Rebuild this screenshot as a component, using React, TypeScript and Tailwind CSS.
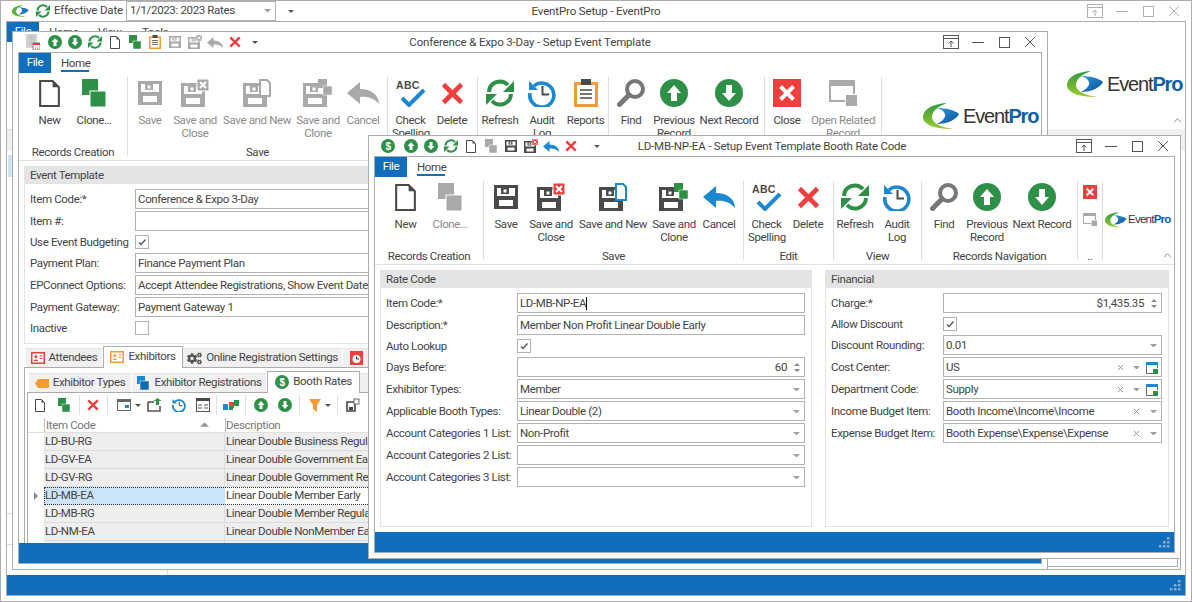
import React from "react";
import { FaCogs } from "react-icons/fa";

const GREEN = "#2e8f47";
const BLUE = "#1c88cf";
const RED = "#ef3e3e";
const DARK = "#4a4a4a";
const GRAY = "#a9a9a9";

type IP = { className?: string };
type CP = IP & { c?: string };

function Floppy({ x = 0, y = 0, c = DARK }: { x?: number; y?: number; c?: string }) {
  return (
    <g transform={`translate(${x} ${y})`}>
      <rect width="24" height="24" fill={c} />
      <rect x="3" y="3" width="18" height="8" fill="#fff" />
      <rect x="7" y="3" width="8" height="6" fill={c} />
      <rect x="9.5" y="4.5" width="3" height="3" fill="#fff" />
      <rect x="5" y="15" width="14" height="6" fill="#fff" />
    </g>
  );
}
const Page = ({ className, c = DARK }: CP) => (
  <svg viewBox="0 0 20 26" className={className}>
    <path d="M1 1H13L19 7V25H1Z" fill="#fff" stroke={c} strokeWidth="2" />
    <path d="M13 1L19 7H13Z" fill={c} />
  </svg>
);
const Clone = ({ className, c = GREEN }: CP) => (
  <svg viewBox="0 0 24 28" className={className}>
    <rect width="16" height="16" fill={c} />
    <rect x="8" y="12" width="16" height="16" fill={c} stroke="#fff" strokeWidth="1" />
  </svg>
);
const Save = ({ className, c = DARK }: CP) => (
  <svg viewBox="0 0 24 24" className={className}><Floppy c={c} /></svg>
);
const SaveClose = ({ className, c = DARK, r = RED }: CP & { r?: string }) => (
  <svg viewBox="0 0 28 28" className={className}>
    <Floppy y={4} c={c} />
    <rect x="16" width="12" height="12" fill={r} stroke="#fff" strokeWidth="1" />
    <path d="M19 3L25 9M25 3L19 9" stroke="#fff" strokeWidth="2" />
  </svg>
);
const SaveNew = ({ className, c = DARK, b = BLUE }: CP & { b?: string }) => (
  <svg viewBox="0 0 28 28" className={className}>
    <Floppy y={4} c={c} />
    <path d="M17 1H24L27 4V17H17Z" fill="#fff" stroke={b} strokeWidth="2" />
  </svg>
);
const SaveClone = ({ className, c = DARK, g = GREEN }: CP & { g?: string }) => (
  <svg viewBox="0 0 30 28" className={className}>
    <Floppy y={4} c={c} />
    <rect x="15" width="9" height="9" fill={g} />
    <rect x="20" y="7" width="9" height="9" fill={g} stroke="#fff" strokeWidth=".5" />
  </svg>
);
const Cancel = ({ className, c = BLUE }: CP) => (
  <svg viewBox="0 0 32 22" className={className}>
    <path d="M0 11L13 0V7C24 7 32 13 32 22C27 16 20 14 13 15V22Z" fill={c} />
  </svg>
);
const XMark = ({ className, c = RED }: CP) => (
  <svg viewBox="0 0 23 23" className={className}>
    <path d="M2.5 2.5L20.5 20.5M20.5 2.5L2.5 20.5" stroke={c} strokeWidth="4.6" />
  </svg>
);
const Check = ({ className }: IP) => (
  <svg viewBox="0 0 30 27" className={className}>
    <text x="0" y="9" fontSize="10.5" fontWeight="700" fill={DARK} fontFamily="Liberation Sans, sans-serif" letterSpacing=".3">ABC</text>
    <path d="M6 18L13 25L28 10" fill="none" stroke={BLUE} strokeWidth="4" />
  </svg>
);
const Refresh = ({ className, c = GREEN }: CP) => (
  <svg viewBox="0 0 28 28" className={className}>
    <g>
      <path d="M3 13A11 11 0 0 1 22 6" fill="none" stroke={c} strokeWidth="4" />
      <path d="M28 2V13H17Z" fill={c} />
    </g>
    <g transform="rotate(180 14 14)">
      <path d="M3 13A11 11 0 0 1 22 6" fill="none" stroke={c} strokeWidth="4" />
      <path d="M28 2V13H17Z" fill={c} />
    </g>
  </svg>
);
const Audit = ({ className, c = BLUE }: CP) => (
  <svg viewBox="0 0 28 28" className={className}>
    <path d="M6 7A12 12 0 1 1 2 14" fill="none" stroke={c} strokeWidth="3.6" />
    <path d="M1 2V11H10Z" fill={c} />
    <path d="M14.5 7V15.5H21" fill="none" stroke={DARK} strokeWidth="2" />
  </svg>
);
const Reports = ({ className }: IP) => (
  <svg viewBox="0 0 24 28" className={className}>
    <rect y="3" width="24" height="25" fill="#f79a33" />
    <rect x="3" y="6" width="18" height="19" fill="#fff" />
    <rect x="7" y="0" width="10" height="6" fill={DARK} />
    <path d="M6 11H18M6 15H18M6 19H18" stroke={DARK} strokeWidth="1.6" />
  </svg>
);
const Find = ({ className }: IP) => (
  <svg viewBox="0 0 28 28" className={className}>
    <circle cx="18" cy="10" r="8" fill="none" stroke="#777" strokeWidth="4" />
    <path d="M12 16L2.5 25.5" stroke="#777" strokeWidth="5" strokeLinecap="round" />
  </svg>
);
const Up = ({ className }: IP) => (
  <svg viewBox="0 0 28 28" className={className}>
    <circle cx="14" cy="14" r="14" fill={GREEN} />
    <path d="M14 6L21 14H17V22H11V14H7Z" fill="#fff" />
  </svg>
);
const Down = ({ className }: IP) => (
  <svg viewBox="0 0 28 28" className={className}>
    <circle cx="14" cy="14" r="14" fill={GREEN} />
    <path d="M14 22L21 14H17V6H11V14H7Z" fill="#fff" />
  </svg>
);
const CloseBox = ({ className }: IP) => (
  <svg viewBox="0 0 28 28" className={className}>
    <rect width="28" height="28" fill={RED} />
    <path d="M7.5 7.5L20.5 20.5M20.5 7.5L7.5 20.5" stroke="#fff" strokeWidth="4" />
  </svg>
);
const OpenRelated = ({ className, c = GRAY }: CP) => (
  <svg viewBox="0 0 28 26" className={className}>
    <path d="M1 5V21H16" fill="none" stroke={c} strokeWidth="2" />
    <rect width="26" height="6" fill={c} />
    <path d="M25 6V14" stroke={c} strokeWidth="2" />
    <rect x="17" y="15" width="11" height="11" fill={c} />
  </svg>
);
const Dollar = ({ className }: IP) => (
  <svg viewBox="0 0 14 14" className={className}>
    <circle cx="7" cy="7" r="7" fill={GREEN} />
    <text x="7" y="10.6" textAnchor="middle" fontSize="10" fontWeight="700" fill="#fff" fontFamily="Liberation Sans, sans-serif">$</text>
  </svg>
);
const GridDoc = ({ className }: IP) => (
  <svg viewBox="0 0 14 16" className={className}>
    <rect width="11" height="14" fill="#d2d2d2" />
    <path d="M2 3H9M2 6H9M2 9H9M5 1V12" stroke="#bcbcbc" strokeWidth="1" />
    <rect x="7" y="9" width="7" height="7" fill="#fff" stroke="#555" strokeWidth=".7" />
    <rect x="7" y="9" width="7" height="2" fill="#e33" />
    <path d="M9 13H9.8M11 13H11.8M9 14.6H9.8M11 14.6H11.8" stroke="#555" strokeWidth=".8" />
  </svg>
);
const Caret = ({ className, c = "#555" }: CP) => (
  <svg viewBox="0 0 8 4" className={className}><path d="M0 0H8L4 4Z" fill={c} /></svg>
);
const PinBtn = ({ c }: { c: string }) => (
  <svg viewBox="0 0 16 14" className="w-[16px] h-[14px]">
    <rect x=".5" y=".5" width="15" height="13" fill="none" stroke={c} />
    <path d="M1 3.5H15" stroke={c} />
    <path d="M8 12V6M5.5 8.5L8 6L10.5 8.5" fill="none" stroke={c} />
  </svg>
);
function WinButtons({ c, className }: { c: string; className: string }) {
  return (
    <div className={`flex items-center ${className}`}>
      <PinBtn c={c} />
      <svg viewBox="0 0 14 14" className="w-[14px] h-[14px] ml-[12px]"><path d="M1 7.5H13" stroke={c} /></svg>
      <svg viewBox="0 0 14 14" className="w-[14px] h-[14px] ml-[12px]"><rect x="2.5" y="2.5" width="10" height="10" fill="none" stroke={c} /></svg>
      <svg viewBox="0 0 14 14" className="w-[14px] h-[14px] ml-[12px]"><path d="M2 2L12 12M12 2L2 12" stroke={c} /></svg>
    </div>
  );
}

function Logo({ big }: { big?: boolean }) {
  return (
    <div className={big ? "flex items-center w-[116px] h-[26px]" : "flex items-center w-[68px] h-[16px]"}>
      <svg viewBox="0 0 37 26" className={big ? "w-[37px] h-[26px] shrink-0" : "w-[22px] h-[16px] shrink-0"}>
        <defs>
          <linearGradient id="lgG" x1="0" y1="0" x2="0" y2="1">
            <stop offset="0" stopColor="#2f9a3f" />
            <stop offset="1" stopColor="#9ccb2c" />
          </linearGradient>
          <linearGradient id="lgB" x1="0" y1="0" x2="1" y2="1">
            <stop offset="0" stopColor="#2a9ad8" />
            <stop offset="1" stopColor="#0c4f9c" />
          </linearGradient>
        </defs>
        <path d="M24 0C8 1 0 7 0 14C0 21 10 26 30 26C14 24 8 18 9 13C10 7 16 3 24 0Z" fill="url(#lgG)" />
        <path d="M14 5C22 5 32 7 36 11C33 17 24 21 14 21C20 18 23 14 22 11C21 8 18 6 14 5Z" fill="url(#lgB)" />
      </svg>
      <span className={big
        ? "ml-[3px] text-[20px] leading-none tracking-[-1.15px] [font-family:'Liberation_Sans',sans-serif] text-[#333]"
        : "ml-[1px] text-[11.5px] leading-none tracking-[-0.75px] [font-family:'Liberation_Sans',sans-serif] text-[#333]"}>
        Event<span className="font-bold text-[#0f5fa8]">Pro</span>
      </span>
    </div>
  );
}

type Btn = { w: string; icon: React.ReactNode; label: string; off?: boolean };
type Grp = { w: string; pl: string; label: string; btns: Btn[] };

function Ribbon({ groups, fill, home }: { groups: Grp[]; fill: React.ReactNode; home: string }) {
  return (
    <div className="shrink-0">
      <div className="flex h-[20px]">
        <div className="w-[32px] bg-[#106ebe] text-white flex items-center justify-center">File</div>
        <div className="ml-[10px] w-[28px] text-center text-[#444] border-b-[2px] border-[#106ebe] h-[19px] pt-[3px] leading-[14px]">{home}</div>
      </div>
      <div className="relative flex h-[88px] border-b border-[#e2e2e2]">
        {groups.map((g) => (
          <div key={g.label + g.w} className={`${g.w} shrink-0 mt-[4px] h-[79px] border-r border-[#dedede] flex flex-col`}>
            <div className={`flex h-[65px] shrink-0 pt-[2px] ${g.pl}`}>
              {g.btns.map((b) => (
                <div key={b.label} className={`${b.w} shrink-0 flex flex-col items-center`}>
                  <div className="h-[28px] flex items-center justify-center">{b.icon}</div>
                  <div className={`mt-[7px] w-full text-center leading-[13px] whitespace-pre ${b.off ? "text-[#8a8a8a]" : "text-[#444]"}`}>{b.label}</div>
                </div>
              ))}
            </div>
            <div className="h-[14px] shrink-0 mt-[3px] leading-[14px] text-center text-[#444]">{g.label}</div>
          </div>
        ))}
        {fill}
      </div>
    </div>
  );
}

const ico = "w-[28px] h-[28px]";
const G1 = (off: boolean): Grp => ({
  w: "w-[109px]", pl: "pl-[10px]", label: "Records Creation",
  btns: [
    { w: "w-[41px]", label: "New", icon: <Page className="w-[21px] h-[27px]" /> },
    { w: "w-[48px]", label: "Clone…", off, icon: <Clone className="w-[24px] h-[28px]" c={off ? GRAY : GREEN} /> },
  ],
});
const G2 = (off: boolean): Grp => {
  const c = off ? GRAY : DARK;
  return {
    w: "w-[260px]", pl: "pl-[5px]", label: "Save",
    btns: [
      { w: "w-[34px]", label: "Save", off, icon: <Save className="w-[24px] h-[24px]" c={c} /> },
      { w: "w-[56px]", label: "Save and\nClose", off, icon: <SaveClose className={ico} c={c} r={off ? GRAY : RED} /> },
      { w: "w-[68px]", label: "Save and New", off, icon: <SaveNew className={ico} c={c} b={off ? GRAY : BLUE} /> },
      { w: "w-[54px]", label: "Save and\nClone", off, icon: <SaveClone className="w-[30px] h-[28px]" c={c} g={off ? GRAY : GREEN} /> },
      { w: "w-[36px]", label: "Cancel", off, icon: <Cancel className="w-[32px] h-[22px]" c={off ? GRAY : BLUE} /> },
    ],
  };
};
const G3: Grp = {
  w: "w-[90px]", pl: "pl-[4px]", label: "Edit",
  btns: [
    { w: "w-[37px]", label: "Check\nSpelling", icon: <Check className="w-[30px] h-[27px]" /> },
    { w: "w-[46px]", label: "Delete", icon: <XMark className="w-[23px] h-[23px]" /> },
  ],
};
const Refr: Btn = { w: "w-[42px]", label: "Refresh", icon: <Refresh className={ico} /> };
const Aud: Btn = { w: "w-[42px]", label: "Audit\nLog", icon: <Audit className={ico} /> };
const Nav: Grp = {
  w: "w-[156px]", pl: "", label: "Records Navigation",
  btns: [
    { w: "w-[44px]", label: "Find", icon: <Find className={ico} /> },
    { w: "w-[42px]", label: "Previous\nRecord", icon: <Up className={ico} /> },
    { w: "w-[68px]", label: "Next Record", icon: <Down className={ico} /> },
  ],
};

const Grip = () => (
  <svg viewBox="0 0 11 11" className="w-[11px] h-[11px]">
    <g fill="#8fa8c4">
      <rect x="8" y="0" width="2.5" height="2.5" />
      <rect x="4" y="4" width="2.5" height="2.5" />
      <rect x="8" y="4" width="2.5" height="2.5" />
      <rect x="0" y="8" width="2.5" height="2.5" />
      <rect x="4" y="8" width="2.5" height="2.5" />
      <rect x="8" y="8" width="2.5" height="2.5" />
    </g>
  </svg>
);
const StatusBar = () => (
  <div className="shrink-0 h-[20px] bg-[#106ebe] flex justify-end items-end pr-[4px] pb-[4px]">
    <Grip />
  </div>
);

const inputCls = "h-[20px] flex-1 min-w-0 border border-[#b2b2b2] bg-white flex items-center pl-[2px] pr-[3px] pt-[1px] text-[#444] overflow-hidden whitespace-nowrap";

function Row({ label, lw, children }: { label: string; lw: string; children: React.ReactNode }) {
  return (
    <div className="flex items-center">
      <div className={`${lw} shrink-0 pt-[2px] text-[#444] whitespace-nowrap`}>{label}</div>
      {children}
    </div>
  );
}
const Drop = () => <Caret className="w-[7px] h-[3.5px] ml-auto shrink-0 mr-[1px]" c="#a0a0a0" />;
const Spin = () => (
  <span className="flex flex-col gap-[3px] ml-[7px] shrink-0 mr-[1px]">
    <Caret className="w-[6px] h-[3px] rotate-180" c="#888" />
    <Caret className="w-[6px] h-[3px]" c="#888" />
  </span>
);
const Clear = () => (
  <svg viewBox="0 0 8 8" className="w-[7px] h-[7px] ml-auto shrink-0"><path d="M1 1L7 7M7 1L1 7" stroke="#8a8a8a" /></svg>
);
const MiniWin = () => (
  <svg viewBox="0 0 12 12" className="w-[12px] h-[12px] ml-[6px] shrink-0">
    <path d="M.5 2V11.5H8" fill="none" stroke="#666" />
    <rect width="12" height="3" fill={BLUE} />
    <path d="M11.5 3V6" stroke="#666" />
    <rect x="7" y="7" width="5" height="5" fill={GREEN} />
  </svg>
);
const Box = ({ checked }: { checked?: boolean }) => (
  <div className="w-[14px] h-[14px] border border-[#b2b2b2] flex items-center justify-center">
    {checked && (
      <svg viewBox="0 0 10 10" className="w-[10px] h-[10px]"><path d="M2 5.5L4 7.5L8.5 2.5" fill="none" stroke="#555" strokeWidth="1.3" /></svg>
    )}
  </div>
);
const ChkRow = ({ label, lw, checked }: { label: string; lw: string; checked?: boolean }) => (
  <div className="flex items-center h-[18px]">
    <div className={`${lw} shrink-0 pt-[2px] text-[#444] whitespace-nowrap`}>{label}</div>
    <Box checked={checked} />
  </div>
);

const Panel = ({ title, className, children }: { title: string; className: string; children: React.ReactNode }) => (
  <div className={`border border-[#e4e4e4] flex flex-col ${className}`}>
    <div className="h-[18px] bg-[#e4e4e4] leading-[18px] text-[#444] -mx-[1px] -mt-[1px] px-[6px]">{title}</div>
    <div className="flex flex-col gap-[2px] pl-[5px] pr-[6px] pt-[5px]">{children}</div>
  </div>
);

const Cell = ({ children, w = "w-[20px]" }: { children?: React.ReactNode; w?: string }) => (
  <div className={`${w} h-[20px] flex items-center justify-center shrink-0`}>{children}</div>
);

const IdCard = ({ c }: { c: string }) => (
  <svg viewBox="0 0 14 12" className="w-[14px] h-[12px] shrink-0">
    <rect x=".75" y=".75" width="12.5" height="10.5" fill="#fff" stroke={c} strokeWidth="1.5" />
    <circle cx="4.8" cy="4.6" r="1.5" fill={c} />
    <path d="M2.5 9C2.5 7 7 7 7 9Z" fill={c} />
    <path d="M8.5 4H11.5M8.5 6.5H11.5" stroke={c} />
  </svg>
);

const Tab = ({ w, icon, label, active }: { w: string; icon: React.ReactNode; label: string; active?: boolean }) => (
  <div className={active
    ? `${w} shrink-0 h-[22px] pb-[2px] bg-white border-[#acacac] border-t border-x -mb-[1px] relative flex items-center justify-center gap-[4px] whitespace-nowrap text-[#444]`
    : `${w} shrink-0 h-[19px] bg-[#f0f0f0] border-t border-[#e4e4e4] flex items-center justify-center gap-[4px] whitespace-nowrap text-[#444] mr-[1px]`}>
    {icon}
    <span>{label}</span>
  </div>
);
const TbSep = () => <div className="w-[1px] h-[20px] bg-[#e0e0e0] shrink-0" />;

const gridRows = [
  ["LD-BU-RG", "Linear Double Business Regular"],
  ["LD-GV-EA", "Linear Double Government Early"],
  ["LD-GV-RG", "Linear Double Government Regular"],
  ["LD-MB-EA", "Linear Double Member Early"],
  ["LD-MB-RG", "Linear Double Member Regular"],
  ["LD-NM-EA", "Linear Double NonMember Early"],
  ["", ""],
];

function EventTemplateWindow() {
  const lw = "w-[105px]";
  return (
    <div className="absolute left-[12px] top-[31px] w-[1036px] h-[539px] bg-white border border-[#acacac] flex flex-col">
      <div className="relative h-[20px] shrink-0 flex items-center pl-[10px]">
        <Cell><GridDoc className="w-[14px] h-[16px]" /></Cell>
        <div className="w-[2px]" />
        <Cell><Up className="w-[14px] h-[14px]" /></Cell>
        <Cell><Down className="w-[14px] h-[14px]" /></Cell>
        <Cell><Refresh className="w-[14px] h-[14px]" /></Cell>
        <Cell><Page className="w-[10px] h-[13px]" /></Cell>
        <Cell><Clone className="w-[12px] h-[14px]" /></Cell>
        <Cell><Reports className="w-[12px] h-[14px]" /></Cell>
        <Cell><Save className="w-[12px] h-[12px]" c={GRAY} /></Cell>
        <Cell><SaveClose className="w-[14px] h-[14px]" c={GRAY} r={GRAY} /></Cell>
        <Cell><Cancel className="w-[16px] h-[11px]" c={GRAY} /></Cell>
        <Cell><XMark className="w-[12px] h-[12px]" /></Cell>
        <Cell><Caret className="w-[6px] h-[3px]" /></Cell>
        <div className="absolute inset-x-0 top-0 h-[20px] leading-[20px] text-center tracking-[-0.15px] text-[#444] pointer-events-none">Conference &amp; Expo 3-Day - Setup Event Template</div>
        <WinButtons c="#555" className="ml-auto mr-[10px] relative" />
      </div>
      <div className="flex-1 min-h-0 mx-[5px] mb-[5px] border border-[#acacac] flex flex-col">
        <Ribbon
          home="Home"
          groups={[
            G1(false),
            G2(true),
            G3,
            { w: "w-[131px]", pl: "pl-[1px]", label: "View", btns: [Refr, Aud, { w: "w-[45px]", label: "Reports", icon: <Reports className="w-[24px] h-[28px]" /> }] },
            Nav,
            {
              w: "w-[117px]", pl: "", label: "Window",
              btns: [
                { w: "w-[44px]", label: "Close", icon: <CloseBox className={ico} /> },
                { w: "w-[68px]", label: "Open Related\nRecord", off: true, icon: <OpenRelated className="w-[28px] h-[26px]" /> },
              ],
            },
          ]}
          fill={<div className="pl-[41px] pt-[30px]"><Logo big /></div>}
        />
        <div className="flex-1 min-h-0 overflow-hidden flex flex-col px-[5px] pt-[5px]">
          <Panel title="Event Template" className="h-[178px] shrink-0">
            <Row label="Item Code:*" lw={lw}><div className={inputCls}>Conference &amp; Expo 3-Day</div></Row>
            <Row label="Item #:" lw={lw}><div className={inputCls} /></Row>
            <ChkRow label="Use Event Budgeting" lw={lw} checked />
            <Row label="Payment Plan:" lw={lw}><div className={inputCls}>Finance Payment Plan</div></Row>
            <Row label="EPConnect Options:" lw={lw}><div className={inputCls}>Accept Attendee Registrations, Show Event Dates</div></Row>
            <Row label="Payment Gateway:" lw={lw}><div className={inputCls}>Payment Gateway 1</div></Row>
            <ChkRow label="Inactive" lw={lw} />
          </Panel>
          <div className="flex items-end pl-[2px] mt-[1px] h-[22px] shrink-0">
            <Tab w="w-[76px]" icon={<IdCard c={RED} />} label="Attendees" />
            <Tab w="w-[80px]" active icon={<IdCard c="#f79a33" />} label="Exhibitors" />
            <Tab w="w-[159px]" icon={<FaCogs className="w-[15px] h-[15px] text-[#555] shrink-0" />} label="Online Registration Settings" />
            <Tab w="w-[30px]" icon={
              <svg viewBox="0 0 13 14" className="w-[13px] h-[14px] shrink-0"><rect width="13" height="14" fill={RED} /><circle cx="6.5" cy="8" r="4" fill="#fff" /><path d="M6.5 5.5V8H9" fill="none" stroke="#333" /></svg>
            } label="" />
          </div>
          <div className="flex-1 min-h-0 border-t border-l border-[#acacac] flex flex-col pl-[2px] pt-[3px] overflow-hidden">
            <div className="flex items-end h-[21px] pl-[2px] shrink-0">
              <Tab w="w-[102px]" icon={<svg viewBox="0 0 14 9" className="w-[14px] h-[9px] shrink-0"><path d="M3 0H14V9H3L0 4.5Z" fill="#f79a33" /></svg>} label="Exhibitor Types" />
              <Tab w="w-[134px]" icon={<svg viewBox="0 0 14 14" className="w-[14px] h-[14px] shrink-0"><rect x="1" width="8" height="8" fill={BLUE} /><rect x="4" y="5" width="9" height="9" fill="#0f6cb8" stroke="#fff" strokeWidth=".5" /></svg>} label="Exhibitor Registrations" />
              <Tab w="w-[93px]" active icon={<Dollar className="w-[14px] h-[14px] shrink-0" />} label="Booth Rates" />
              <Tab w="w-[30px]" icon={<svg viewBox="0 0 10 14" className="w-[10px] h-[14px] shrink-0"><circle cx="5" cy="2.5" r="2.5" fill={BLUE} /><path d="M1 5H9V10H7V14H3V10H1Z" fill={BLUE} /></svg>} label="" />
            </div>
            <div className="border-t border-l border-[#acacac] flex-1 flex flex-col min-h-0">
              <div className="h-[25px] pb-[1px] shrink-0 flex items-center text-[#444] pl-[2px]">
                <Cell><Page className="w-[10px] h-[13px]" /></Cell>
                <div className="w-[4px]" />
                <Cell><Clone className="w-[12px] h-[14px]" /></Cell>
                <div className="w-[5px]" /><TbSep /><div className="w-[2px]" />
                <Cell w="w-[22px]"><XMark className="w-[12px] h-[12px]" /></Cell>
                <div className="w-[3px]" /><TbSep /><div className="w-[5px]" />
                <Cell w="w-[22px]">
                  <svg viewBox="0 0 14 12" className="w-[14px] h-[12px]"><rect x=".5" y=".5" width="13" height="11" fill="#fff" stroke="#666" /><rect width="14" height="3" fill="#666" /><rect x="8" y="6" width="4" height="3" fill={BLUE} /></svg>
                </Cell>
                <Caret className="w-[6px] h-[3px]" />
                <div className="w-[4px]" />
                <Cell><svg viewBox="0 0 16 14" className="w-[16px] h-[14px]"><path d="M1 4V13H13V8" fill="none" stroke="#555" strokeWidth="1.6" /><path d="M1 4H7" stroke="#555" strokeWidth="1.6" /><path d="M9 7V3H6.5L10.5 0L14.5 3H12V7Z" fill={GREEN} /></svg></Cell>
                <div className="w-[4px]" />
                <Cell><Audit className="w-[14px] h-[14px]" /></Cell>
                <div className="w-[4px]" />
                <Cell><svg viewBox="0 0 14 14" className="w-[14px] h-[14px]"><rect x=".5" y=".5" width="13" height="13" fill="#fff" stroke="#555" /><rect width="14" height="3" fill={DARK} /><path d="M2 7H6M2 10H6M8 7H12M8 10H12" stroke="#555" /></svg></Cell>
                <div className="w-[3px]" /><TbSep /><div className="w-[4px]" />
                <Cell><svg viewBox="0 0 16 12" className="w-[16px] h-[12px]"><rect y="5" width="5" height="6" fill={BLUE} /><rect x="6" y="3" width="5" height="6" fill={RED} /><rect x="11" y="1" width="5" height="6" fill={GREEN} /><rect x="6" y="7" width="4" height="4" fill={GREEN} /></svg></Cell>
                <div className="w-[4px]" /><TbSep /><div className="w-[5px]" />
                <Cell><Up className="w-[14px] h-[14px]" /></Cell>
                <div className="w-[4px]" />
                <Cell><Down className="w-[14px] h-[14px]" /></Cell>
                <div className="w-[4px]" /><TbSep /><div className="w-[5px]" />
                <Cell><svg viewBox="0 0 14 15" className="w-[14px] h-[15px]"><path d="M1 1H13L9 7V14L5 11V7Z" fill="#f79a33" /></svg></Cell>
                <Caret className="w-[6px] h-[3px]" />
                <div className="w-[6px]" /><TbSep /><div className="w-[5px]" />
                <Cell><svg viewBox="0 0 14 14" className="w-[14px] h-[14px]"><path d="M1 4H9V13H1Z" fill="none" stroke="#444" strokeWidth="1.6" /><rect x="3" y="9" width="4" height="3" fill="#444" /><rect x="8" y="1" width="5" height="5" fill="#fff" stroke="#666" /></svg></Cell>
              </div>
              <div className="flex h-[15px] shrink-0 border-b border-[#e0e0e0]">
                <div className="w-[16px] shrink-0" />
                <div className="w-[181px] shrink-0 border-l border-[#bcbcbc] pl-[1px] text-[#777] leading-[15px] relative flex">
                  Item Code
                  <Caret className="w-[9px] h-[5px] rotate-180 absolute right-[16px] top-[4px]" c="#999" />
                </div>
                <div className="flex-1 border-l border-[#bcbcbc] text-[#777] leading-[15px]">Description</div>
              </div>
              {gridRows.map((r, i) => {
                const sel = i === 3;
                return (
                  <div key={i} className="flex h-[18px] shrink-0">
                    <div className="w-[16px] shrink-0 flex items-center justify-center">
                      {sel && <svg viewBox="0 0 4 8" className="w-[4px] h-[8px]"><path d="M0 0L4 4L0 8Z" fill="#8a8a8a" /></svg>}
                    </div>
                    {sel ? (
                      <div className="flex flex-1 min-w-0 outline-1 outline-dotted outline-[#333] -outline-offset-1">
                        <div className="w-[181px] shrink-0 bg-[#cce4f7] text-[#444] pl-[1px] leading-[17px]">{r[0]}</div>
                        <div className="flex-1 bg-white text-[#444] pl-[1px] leading-[17px] whitespace-nowrap overflow-hidden">{r[1]}</div>
                      </div>
                    ) : (
                      <div className="flex flex-1 min-w-0 bg-[#eeeeee] border-b border-[#dcdcdc]">
                        <div className="w-[181px] shrink-0 text-[#444] pl-[1px] leading-[17px] border-r border-[#dcdcdc]">{r[0]}</div>
                        <div className="flex-1 text-[#444] pl-[1px] leading-[17px] whitespace-nowrap overflow-hidden">{r[1]}</div>
                      </div>
                    )}
                  </div>
                );
              })}
            </div>
          </div>
        </div>
        <StatusBar />
      </div>
    </div>
  );
}

function RateCodeWindow() {
  const l1 = "w-[131px]";
  const l2 = "w-[112px]";
  return (
    <div className="absolute left-[368px] top-[135px] w-[813px] h-[424px] bg-white border border-[#acacac] flex flex-col">
      <div className="relative h-[20px] shrink-0 flex items-center pl-[8px]">
        <Cell w="w-[21px]"><Dollar className="w-[14px] h-[14px]" /></Cell>
        <div className="w-[3px]" />
        <Cell><Up className="w-[14px] h-[14px]" /></Cell>
        <Cell><Down className="w-[14px] h-[14px]" /></Cell>
        <Cell><Refresh className="w-[14px] h-[14px]" /></Cell>
        <Cell><Page className="w-[10px] h-[13px]" /></Cell>
        <Cell><Clone className="w-[12px] h-[14px]" c={GRAY} /></Cell>
        <Cell><Save className="w-[12px] h-[12px]" /></Cell>
        <Cell><SaveClose className="w-[14px] h-[14px]" /></Cell>
        <Cell><Cancel className="w-[16px] h-[11px]" /></Cell>
        <Cell><XMark className="w-[12px] h-[12px]" /></Cell>
        <div className="w-[6px]" />
        <Cell><Caret className="w-[6px] h-[3px]" /></Cell>
        <div className="absolute inset-x-0 top-0 h-[20px] leading-[20px] text-center tracking-[-0.2px] pr-[5px] text-[#444] pointer-events-none">LD-MB-NP-EA - Setup Event Template Booth Rate Code</div>
        <WinButtons c="#555" className="ml-auto mr-[10px] relative" />
      </div>
      <div className="flex-1 min-h-0 mx-[5px] mb-[5px] border border-[#acacac] flex flex-col">
        <Ribbon
          home="Home"
          groups={[
            { ...G1(false), btns: [G1(false).btns[0], G1(true).btns[1]] },
            G2(false),
            G3,
            { w: "w-[88px]", pl: "", label: "View", btns: [Refr, Aud] },
            Nav,
            {
              w: "w-[25px]", pl: "", label: "..",
              btns: [{
                w: "w-[24px]", label: "",
                icon: (
                  <div className="flex flex-col items-center gap-[14px] mt-[16px]">
                    <CloseBox className="w-[14px] h-[14px]" />
                    <OpenRelated className="w-[14px] h-[13px]" />
                  </div>
                ),
              }],
            },
          ]}
          fill={
            <div className="pl-[2px] pt-[35px] flex-1 relative">
              <Logo />
              <svg viewBox="0 0 10 6" className="w-[9px] h-[5px] absolute right-[2px] bottom-[6px]"><path d="M1 5L5 1L9 5" fill="none" stroke="#888" strokeWidth="1.2" /></svg>
            </div>
          }
        />
        <div className="flex-1 min-h-0 flex px-[5px] py-[5px] gap-[13px]">
          <Panel title="Rate Code" className="w-[432px] shrink-0">
            <Row label="Item Code:*" lw={l1}>
              <div className={inputCls}>LD-MB-NP-EA<span className="w-[1px] h-[13px] bg-black" /></div>
            </Row>
            <Row label="Description:*" lw={l1}><div className={inputCls}>Member Non Profit Linear Double Early</div></Row>
            <ChkRow label="Auto Lookup" lw={l1} checked />
            <Row label="Days Before:" lw={l1}><div className={`${inputCls} justify-end`}>60<Spin /></div></Row>
            <Row label="Exhibitor Types:" lw={l1}><div className={inputCls}>Member<Drop /></div></Row>
            <Row label="Applicable Booth Types:" lw={l1}><div className={inputCls}>Linear Double (2)<Drop /></div></Row>
            <Row label="Account Categories 1 List:" lw={l1}><div className={inputCls}>Non-Profit<Drop /></div></Row>
            <Row label="Account Categories 2 List:" lw={l1}><div className={inputCls}><Drop /></div></Row>
            <Row label="Account Categories 3 List:" lw={l1}><div className={inputCls}><Drop /></div></Row>
          </Panel>
          <Panel title="Financial" className="w-[344px] shrink-0">
            <Row label="Charge:*" lw={l2}><div className={`${inputCls} justify-end`}>$1,435.35<Spin /></div></Row>
            <ChkRow label="Allow Discount" lw={l2} checked />
            <Row label="Discount Rounding:" lw={l2}><div className={inputCls}>0.01<Drop /></div></Row>
            <Row label="Cost Center:" lw={l2}>
              <div className={inputCls}>US<Clear /><span className="ml-[9px] shrink-0 flex"><Caret className="w-[7px] h-[3.5px]" c="#a0a0a0" /></span><MiniWin /></div>
            </Row>
            <Row label="Department Code:" lw={l2}>
              <div className={inputCls}>Supply<Clear /><span className="ml-[9px] shrink-0 flex"><Caret className="w-[7px] h-[3.5px]" c="#a0a0a0" /></span><MiniWin /></div>
            </Row>
            <Row label="Income Budget Item:" lw={l2}>
              <div className={inputCls}>Booth Income\Income\Income<Clear /><span className="ml-[10px] mr-[1px] shrink-0 flex"><Caret className="w-[7px] h-[3.5px]" c="#a0a0a0" /></span></div>
            </Row>
            <Row label="Expense Budget Item:" lw={l2}>
              <div className={inputCls}>Booth Expense\Expense\Expense<Clear /><span className="ml-[10px] mr-[1px] shrink-0 flex"><Caret className="w-[7px] h-[3.5px]" c="#a0a0a0" /></span></div>
            </Row>
          </Panel>
        </div>
        <StatusBar />
      </div>
    </div>
  );
}

export default function App() {
  return (
    <div className="relative w-[1192px] h-[602px] bg-white overflow-hidden text-[11.5px] tracking-[-0.35px] [font-family:Roboto,sans-serif]">
      {/* Main window */}
      <div className="absolute inset-0 border border-[#acacac] flex flex-col">
        <div className="relative h-[20px] shrink-0 flex items-center pl-[11px]">
          <svg viewBox="0 0 37 26" className="w-[17px] h-[12px] shrink-0">
            <path d="M24 0C8 1 0 7 0 14C0 21 10 26 30 26C14 24 8 18 9 13C10 7 16 3 24 0Z" fill="#5fb13a" />
            <path d="M14 5C22 5 32 7 36 11C33 17 24 21 14 21C20 18 23 14 22 11C21 8 18 6 14 5Z" fill="#1c78c0" />
          </svg>
          <Refresh className="w-[14px] h-[14px] ml-[7px] shrink-0" />
          <span className="ml-[4px] w-[69px] whitespace-nowrap tracking-[-0.15px] text-[#444]">Effective Date</span>
          <div className="ml-[3px] w-[150px] h-[20px] border border-[#b2b2b2] flex items-center pl-[3px] pr-[3px] text-[#444]">1/1/2023: 2023 Rates<Drop /></div>
          <Caret className="w-[6px] h-[3px] ml-[12px]" />
          <div className="absolute inset-x-0 top-0 h-[20px] leading-[20px] text-center tracking-[-0.15px] text-[#444]">EventPro Setup - EventPro</div>
          <WinButtons c="#b0b0b0" className="ml-auto mr-[10px] relative" />
        </div>
        <div className="flex-1 min-h-0 mx-[5px] mb-[5px] border border-[#acacac] flex flex-col">
          <div className="flex h-[20px] shrink-0">
            <div className="w-[32px] bg-[#106ebe] text-white flex items-center justify-center">File</div>
            <div className="ml-[10px] w-[28px] text-center text-[#444] pt-[3px] leading-[14px]">Home</div>
            <div className="ml-[21px] w-[24px] text-[#444] pt-[3px] leading-[14px]">View</div>
            <div className="ml-[20px] text-[#444] pt-[3px] leading-[14px]">Tools</div>
          </div>
          <div className="relative h-[87px] shrink-0 flex justify-end">
            <div className="pr-[2px] pt-[29px]"><Logo big /></div>
            <svg viewBox="0 0 10 6" className="w-[9px] h-[5px] absolute right-[3px] bottom-[6px]"><path d="M1 5L5 1L9 5" fill="none" stroke="#888" strokeWidth="1.2" /></svg>
          </div>
          <div className="h-[22px] shrink-0 bg-[#f0f0f0]" />
          <div className="flex-1" />
          <StatusBar />
        </div>
      </div>
      {/* Fragments of the main window's content that show round the child windows */}
      <div className="absolute left-[7px] top-[129px] w-[6px] h-[1px] bg-[#dddddd]" />
      <div className="absolute left-[8px] top-[155px] w-[4px] h-[22px] bg-[#cfe3f5]" />
      <div className="absolute left-[7px] top-[513px] w-[6px] h-[32px] border-y border-[#dddddd]" />
      <div className="absolute left-[167px] top-[560px] w-[1px] h-[15px] bg-[#dddddd]" />
      <div className="absolute left-[1040px] top-[300px] w-[141px] h-[270px] border border-[#acacac]" />
      <div className="absolute left-[1040px] top-[300px] w-[138px] h-[267px] border border-[#acacac]" />
      <EventTemplateWindow />
      <RateCodeWindow />
    </div>
  );
}
